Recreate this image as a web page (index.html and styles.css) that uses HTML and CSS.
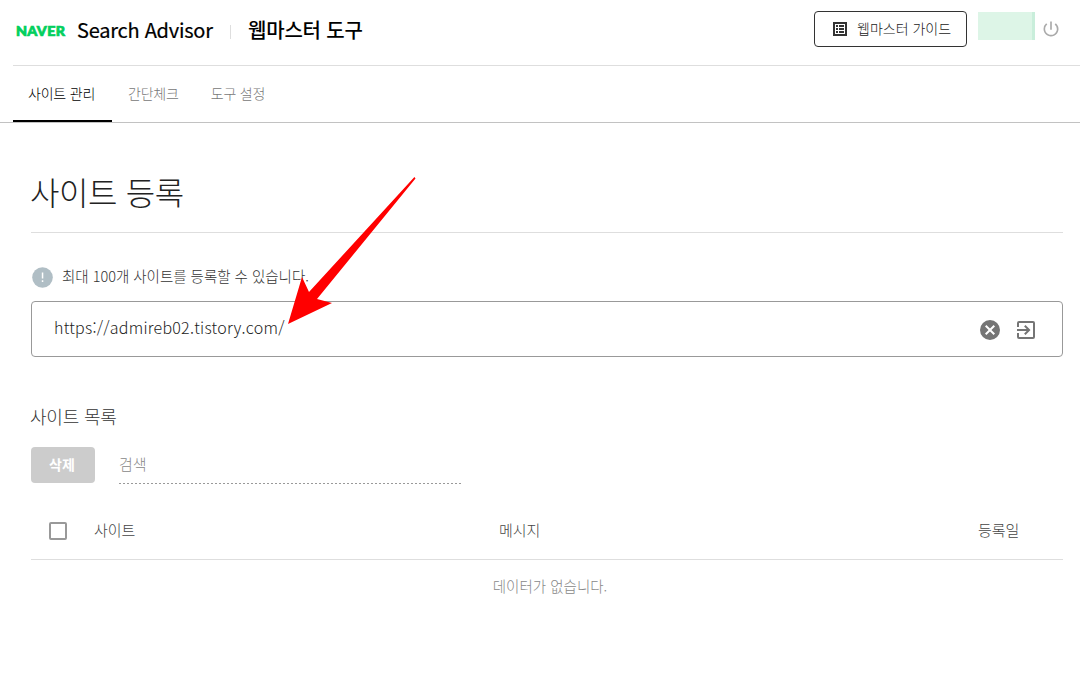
FILE: index.html
```html
<!DOCTYPE html>
<html lang="ko">
<head>
    <meta charset="UTF-8">
    <meta name="viewport" content="width=device-width, initial-scale=1.0">
    <title>웹마스터 도구</title>
    <link rel="stylesheet" href="styles.css">
</head>
<body>
    <header class="header">
        <span class="logo"><span class="logo-text">NAVER</span></span>
        <span class="brand">Search Advisor</span>
        <span class="divider"></span>
        <span class="product">웹마스터 도구</span>
        <div class="header-right">
            <button class="guide-btn">
                <svg class="guide-icon" viewBox="0 0 14 14">
                    <path fill="#333" fill-rule="evenodd" d="M0 0h14v14H0zM2 2v10h10V2z"/>
                    <path fill="#333" d="M3 3h2v2H3zM6 3h5v2H6zM3 6h2v2H3zM6 6h5v2H6zM3 9h2v2H3zM6 9h5v2H6z"/>
                </svg>
                <span class="guide-label">웹마스터 가이드</span>
            </button>
            <span class="user"></span>
            <svg class="power" viewBox="0 0 24 24">
                <path d="M13 3h-2v10h2V3zm4.83 2.17-1.42 1.42A6.92 6.92 0 0 1 19 12a7 7 0 1 1-11.42-5.42L6.17 5.17A8.93 8.93 0 0 0 3 12a9 9 0 1 0 14.83-6.83z"/>
            </svg>
        </div>
    </header>

    <nav class="tabs">
        <a class="tab active"><span>사이트 관리</span></a>
        <a class="tab"><span>간단체크</span></a>
        <a class="tab"><span>도구 설정</span></a>
    </nav>

    <main class="content">
        <h1 class="title">사이트 등록</h1>

        <div class="notice">
            <svg class="notice-icon" viewBox="0 0 21 21">
                <circle cx="10.5" cy="10.5" r="10.3" fill="#b0bec5"/>
                <path fill="#fff" d="M9.8 5.5h1.5v6H9.8zM9.8 13.3h1.5v1.7H9.8z"/>
            </svg>
            <span class="notice-text">최대 100개 사이트를 등록할 수 있습니다.</span>
        </div>

        <div class="url-box">
            <span class="url">https://admireb02.tistory.com/</span>
            <svg class="icon" viewBox="0 0 24 24">
                <path d="M12 2a10 10 0 1 0 0 20 10 10 0 0 0 0-20zm5 13.59L15.59 17 12 13.41 8.41 17 7 15.59 10.59 12 7 8.41 8.41 7 12 10.59 15.59 7 17 8.41 13.41 12z"/>
            </svg>
            <svg class="icon" viewBox="0 0 24 24">
                <path d="M10.09 15.59 11.5 17l5-5-5-5-1.41 1.41L12.67 11H3v2h9.67zM19 3H5a2 2 0 0 0-2 2v4h2V5h14v14H5v-4H3v4a2 2 0 0 0 2 2h14a2 2 0 0 0 2-2V5a2 2 0 0 0-2-2z"/>
            </svg>
        </div>

        <h2 class="subtitle">사이트 목록</h2>
        <div class="toolbar">
            <button class="delete-btn">삭제</button>
            <div class="search"><span>검색</span></div>
        </div>

        <div class="table-head">
            <span class="checkbox"></span>
            <span class="col-site">사이트</span>
            <span class="col-message">메시지</span>
            <span class="col-date">등록일</span>
        </div>
        <div class="empty"><span>데이터가 없습니다.</span></div>
    </main>

    <svg class="arrow" viewBox="0 0 130 150">
        <polygon points="2,149 16,102 23,117 127.5,3 128.5,2 129.5,3.5 31,124 46,128"/>
    </svg>
</body>
</html>
```
FILE: styles.css
```css
* {
    box-sizing: border-box;
}
body {
    margin: 0;
    position: relative;
    height: 674px;
    overflow: hidden;
    background: #fff;
    color: #333;
    font-family: "Noto Sans CJK KR", sans-serif;
    font-weight: 300;
    white-space: nowrap;
}
button {
    font-family: inherit;
    padding: 0;
}
.header {
    display: flex;
    align-items: center;
    height: 66px;
    margin-left: 13px;
    padding: 0 20px 5px 3px;
    border-bottom: 1px solid #dedede;
    color: #000;
}
.logo {
    width: 61px;
    padding-top: 4px;
    font-family: Lato, sans-serif;
    font-size: 12.5px;
    font-weight: 900;
    line-height: 16px;
    color: #03cf5d;
    -webkit-text-stroke: 0.7px #03cf5d;
}
.logo-text {
    display: inline-block;
    transform: scaleX(1.14);
    transform-origin: left;
    letter-spacing: 0.3px;
}
.brand {
    width: 153px;
    font-size: 20px;
    font-weight: 400;
    line-height: 30px;
    letter-spacing: -0.25px;
    -webkit-text-stroke: 0.2px #000;
}
.divider {
    width: 1px;
    height: 14px;
    margin-top: 4px;
    background: #dedede;
}
.product {
    margin-left: 17px;
    font-size: 20px;
    font-weight: 500;
    line-height: 30px;
    letter-spacing: -0.2px;
}
.header-right {
    display: flex;
    align-items: center;
    margin: -2px 0 0 auto;
}
.guide-btn {
    display: flex;
    align-items: center;
    width: 153px;
    height: 36px;
    padding-left: 18px;
    border: 1px solid #333;
    border-radius: 4px;
    background: #fff;
    color: #222;
}
.guide-icon {
    width: 14px;
    height: 14px;
    margin-right: 10px;
}
.guide-label {
    padding-bottom: 3px;
    font-size: 14px;
    font-weight: 300;
}
.user {
    width: 57px;
    height: 28px;
    margin: -6px 7px 0 11px;
    background: #ddf5e7;
    border-right: 3px solid #c9eedb;
}
.power {
    width: 20px;
    height: 20px;
    margin: 0 -1px;
    fill: #aaa;
}
.tabs {
    display: flex;
    height: 57px;
    padding-left: 13px;
    border-bottom: 1px solid #c2c2c2;
}
.tab {
    padding: 0 16px;
    font-size: 14px;
    line-height: 54px;
    letter-spacing: -0.2px;
    color: #777;
}
.tab.active {
    width: 99px;
    padding-left: 15px;
    border-bottom: 2px solid #000;
    color: #000;
}
.content {
    padding: 0 17px 0 31px;
}
.title {
    margin: 0;
    height: 110px;
    padding-top: 44px;
    border-bottom: 1px solid #dedede;
    font-size: 32px;
    font-weight: 300;
    line-height: 48px;
    letter-spacing: -0.4px;
    text-indent: -1px;
    color: #222;
}
.notice {
    display: flex;
    align-items: center;
    height: 22px;
    margin-top: 33px;
}
.notice-icon {
    width: 21px;
    height: 21px;
    margin: 0 9px 0 1px;
}
.notice-text {
    padding-bottom: 3px;
    font-size: 14.5px;
    letter-spacing: -0.02px;
}
.url-box {
    display: flex;
    align-items: center;
    height: 56px;
    margin-top: 13px;
    padding: 1px 24px 0 22px;
    border: 1px solid #999;
    border-radius: 4px;
}
.url {
    margin-right: auto;
    padding-bottom: 6px;
    font-size: 16px;
    letter-spacing: 0.24px;
    color: #222;
}
.icon {
    width: 24px;
    height: 24px;
    margin-left: 12px;
    fill: #757575;
}
.subtitle {
    margin: 46px 0 0;
    height: 44px;
    font-size: 18px;
    font-weight: 300;
    line-height: 26px;
    letter-spacing: -0.2px;
    text-indent: -1px;
}
.toolbar {
    display: flex;
    height: 37px;
}
.delete-btn {
    width: 64px;
    height: 36px;
    margin-right: 24px;
    padding: 0 2px 3px 0;
    border: 0;
    border-radius: 4px;
    background: #ccc;
    color: #fff;
    font-size: 14px;
    font-weight: 700;
}
.search {
    width: 343px;
    background: repeating-linear-gradient(to right, #999 0 2px, transparent 2px 4px) left bottom / 100% 1px no-repeat;
    font-size: 15px;
    line-height: 34px;
    color: #888;
}
.table-head {
    display: grid;
    grid-template-columns: 63px 405px 1fr 85px;
    align-items: center;
    height: 76px;
    padding-top: 15px;
    border-bottom: 1px solid #dedede;
    font-size: 15px;
    color: #444;
}
.checkbox {
    width: 18px;
    height: 18px;
    margin: 3px 0 0 18px;
    border: 2px solid #999;
    border-radius: 2px;
}
.empty {
    padding-left: 6px;
    font-size: 14.5px;
    line-height: 52px;
    text-align: center;
    color: #888;
}
.arrow {
    position: absolute;
    left: 286px;
    top: 175px;
    width: 130px;
    height: 150px;
    fill: #f00;
}
```
